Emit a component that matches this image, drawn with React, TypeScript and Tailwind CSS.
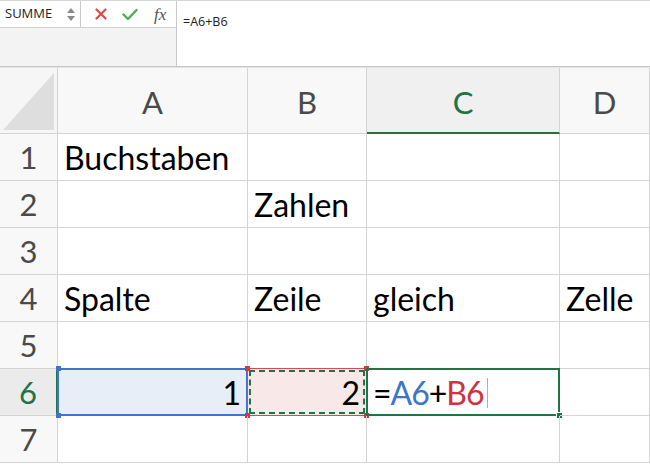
import React from "react";

const font = { fontFamily: "Lato, 'Open Sans', sans-serif" };

const cols = ["A", "B", "C", "D"];

type Cell = { text?: string; align?: "left" | "right" };

const rows: Cell[][] = [
  [{ text: "Buchstaben" }, {}, {}, {}],
  [{}, { text: "Zahlen" }, {}, {}],
  [{}, {}, {}, {}],
  [{ text: "Spalte" }, { text: "Zeile" }, { text: "gleich" }, { text: "Zelle" }],
  [{}, {}, {}, {}],
  [{ text: "1", align: "right" }, { text: "2", align: "right" }, {}, {}],
  [{}, {}, {}, {}],
];

function Corner({ className }: { className: string }) {
  return <span className={`absolute h-[5px] w-[5px] ${className}`} />;
}

function FormulaBar() {
  return (
    <div className="flex h-[67px] border-t border-[#d6d6d6] border-b border-b-[#c6c6c6] bg-white">
      <div className="flex w-[177px] flex-col border-r border-[#c9c9c9]">
        <div className="flex h-[27px] items-center border-b border-[#d0d0d0]">
          <div className="flex h-full w-[81px] items-center justify-between border-r border-[#c9c9c9] pl-[5px] pr-[5px]">
            <span className="text-[13px] text-[#222]" style={{ fontFamily: "'Open Sans', sans-serif" }}>
              SUMME
            </span>
            <span className="flex flex-col items-center gap-[3px]">
              <svg width="8" height="5" viewBox="0 0 8 5">
                <path d="M4 0 L8 5 L0 5 Z" fill="#8a8a8a" />
              </svg>
              <svg width="8" height="5" viewBox="0 0 8 5">
                <path d="M0 0 L8 0 L4 5 Z" fill="#8a8a8a" />
              </svg>
            </span>
          </div>
          <div className="flex flex-1 items-center pl-[14px]">
            <svg width="12" height="12" viewBox="0 0 12 12">
              <path d="M1.5 1.5 L10.5 10.5 M10.5 1.5 L1.5 10.5" stroke="#e04848" strokeWidth="2.2" strokeLinecap="round" />
            </svg>
            <svg width="16" height="13" viewBox="0 0 16 13" className="ml-[15px]">
              <path d="M1.5 6.5 L6 11 L14.5 2" fill="none" stroke="#4caf50" strokeWidth="2.4" strokeLinecap="round" strokeLinejoin="round" />
            </svg>
            <span
              className="ml-[16px] text-[17px] italic leading-none text-[#555]"
              style={{ fontFamily: "'Liberation Serif', serif" }}
            >
              fx
            </span>
          </div>
        </div>
        <div className="flex-1 bg-[#f3f3f3]" />
      </div>
      <div className="flex-1 pl-[6px] pt-[7px]">
        <span className="text-[12.5px] text-[#222]" style={{ fontFamily: "'Open Sans', sans-serif" }}>
          =A6+B6
        </span>
      </div>
    </div>
  );
}

export default function App() {
  return (
    <div className="h-[464px] w-[650px] overflow-hidden bg-white" style={font}>
      <FormulaBar />
      <div className="h-[1px] bg-[#e6e6e6]" />
      <div className="grid grid-cols-[58px_190px_119px_193px_1fr] grid-rows-[66px_repeat(7,47px)]">
        {/* header row */}
        <div className="relative border-r border-b border-[#d4d4d4] bg-[#f6f6f6]">
          <svg className="absolute inset-0" width="57" height="65" viewBox="0 0 57 65">
            <path d="M3 62 L54 5 L54 62 Z" fill="#dedede" />
          </svg>
        </div>
        {cols.map((c) => (
          <div
            key={c}
            className={
              c === "C"
                ? "flex items-center justify-center border-r border-b-2 border-r-[#d4d4d4] border-b-[#217346] bg-[#f0f0f0] pt-[4px] text-[31px] text-[#217346]"
                : "flex items-center justify-center border-r border-b border-[#d4d4d4] bg-[#f8f8f8] pt-[4px] text-[31px] text-[#4a4a4a]"
            }
          >
            {c}
          </div>
        ))}
        {rows.map((r, i) => (
          <React.Fragment key={i}>
            <div
              className={
                i === 5
                  ? "flex items-center justify-center border-b border-r-2 border-b-[#d4d4d4] border-r-[#217346] bg-[#ebebeb] text-[31px] text-[#217346]"
                  : "flex items-center justify-center border-r border-b border-[#d4d4d4] bg-[#f8f8f8] text-[31px] text-[#4a4a4a]"
              }
            >
              {i + 1}
            </div>
            {r.map((cell, j) => {
              const isA6 = i === 5 && j === 0;
              const isB6 = i === 5 && j === 1;
              const isC6 = i === 5 && j === 2;
              return (
                <div
                  key={j}
                  className={`relative flex items-center border-r border-b border-[#d4d4d4] pt-[2px] text-[32px] text-black ${
                    cell.align === "right" ? "justify-end pr-[6px]" : "justify-start pl-[6px]"
                  } ${isA6 ? "bg-[#e8eef8]" : ""} ${isB6 ? "bg-[#f9e8e8]" : ""}`}
                >
                  {isA6 && (
                    <>
                      <div className="absolute inset-[-1px] border-2 border-[#3f74c6]" />
                      <Corner className="left-[-2px] top-[-3px] bg-[#3f74c6]" />
                      <Corner className="left-[-2px] bottom-[-3px] bg-[#3f74c6]" />
                    </>
                  )}
                  {isB6 && (
                    <>
                      <div className="absolute inset-[-1px] border border-[#d9474f]" />
                      <div className="absolute inset-[1px] border-2 border-dashed border-[#217346]" />
                      <Corner className="left-[-3px] top-[-3px] bg-[#d03a44]" />
                      <Corner className="left-[-3px] bottom-[-3px] bg-[#d03a44]" />
                      <Corner className="right-[-3px] top-[-3px] bg-[#d03a44]" />
                      <Corner className="right-[-3px] bottom-[-3px] bg-[#d03a44]" />
                    </>
                  )}
                  {isC6 && (
                    <>
                      <div className="absolute inset-[-1px] border-2 border-[#217346]" />
                      <span className="absolute right-[-4px] bottom-[-4px] h-[7px] w-[7px] border border-white bg-[#217346]" />
                      <span className="relative flex items-center tracking-[-1px]">
                        <span className="text-black">=</span>
                        <span className="text-[#3b74c9]">A6</span>
                        <span className="text-black">+</span>
                        <span className="text-[#cd3340]">B6</span>
                        <span className="ml-[3px] h-[30px] w-[1px] bg-[#b0b0b0]" />
                      </span>
                    </>
                  )}
                  {cell.text && <span className="relative">{cell.text}</span>}
                </div>
              );
            })}
          </React.Fragment>
        ))}
      </div>
    </div>
  );
}
